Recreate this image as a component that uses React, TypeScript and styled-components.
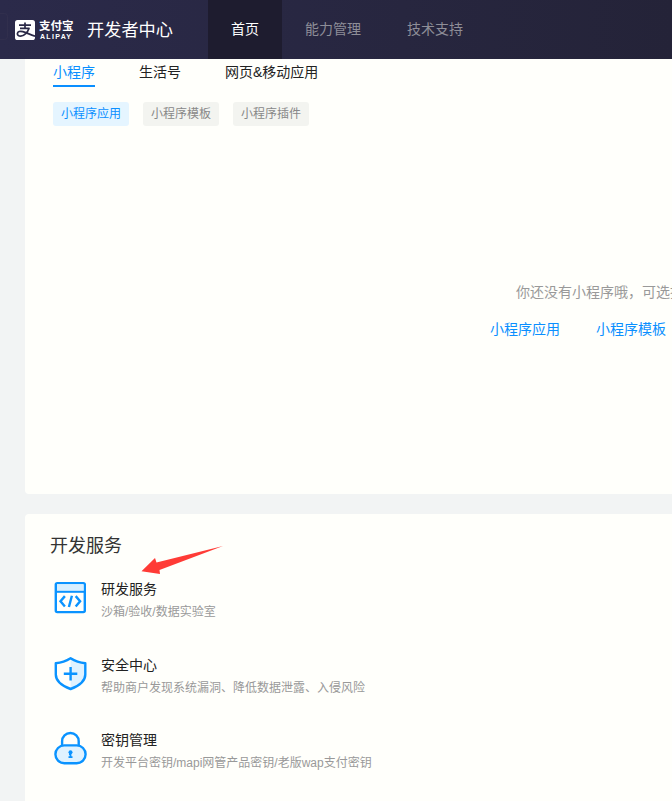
import React from "react";
import styled, { createGlobalStyle } from "styled-components";

const GlobalStyle = createGlobalStyle`
  * { box-sizing: border-box; }
  html, body { margin: 0; padding: 0; }
  body {
    background: #f2f4f4;
    font-family: "Liberation Sans", "Noto Sans CJK SC", sans-serif;
    font-size: 14px;
    overflow: hidden;
  }
`;

const Page = styled.div`
  display: flex;
  flex-direction: column;
  width: 672px;
  height: 801px;
  overflow: hidden;
`;

const Header = styled.header`
  display: flex;
  align-items: center;
  flex: none;
  height: 59px;
  background: linear-gradient(90deg, #2b2a4a 0%, #27263f 60%, #242338 100%);
`;

const MenuEdge = styled.div`
  width: 8px;
  height: 27px;
  margin-right: 7px;
  border: 1px solid #312f4d;
  border-left: 0;
  border-radius: 0 4px 4px 0;
  margin-top: -6px;
`;

const LogoMark = styled.svg`
  display: block;
  flex: none;
  width: 20px;
  height: 20px;
`;

const LogoWords = styled.div`
  display: flex;
  flex-direction: column;
  width: 35px;
  height: 21px;
  margin-left: 4px;
  color: #fff;
  white-space: nowrap;
`;

const LogoChinese = styled.span`
  font-size: 11.5px;
  font-weight: 700;
  line-height: 15px;
  height: 14px;
`;

const LogoLatin = styled.span`
  font-size: 7px;
  font-weight: 700;
  line-height: 8px;
  letter-spacing: 1.3px;
  padding-left: 1px;
`;

const SiteTitle = styled.h1`
  margin: 0 0 0 13px;
  width: 121px;
  color: #fff;
  font-size: 17.2px;
  font-weight: 400;
  line-height: 58px;
`;

const Nav = styled.nav`
  display: flex;
`;

const NavItem = styled.a<{ $active?: boolean }>`
  padding: 0 23px;
  line-height: 59px;
  color: ${(p) => (p.$active ? "#fff" : "#8e8e98")};
  background: ${(p) => (p.$active ? "#1e1c2f" : "transparent")};
`;

const Card = styled.section`
  flex: none;
  margin-left: 25px;
  background: #fffffb;
`;

const AppsCard = styled(Card)`
  height: 435px;
  padding-left: 28px;
  border-bottom-left-radius: 4px;
`;

const Tabs = styled.div`
  display: flex;
  gap: 44px;
  height: 28px;
`;

const Tab = styled.a<{ $active?: boolean }>`
  height: 28px;
  line-height: 26px;
  color: ${(p) => (p.$active ? "#0a8fff" : "#222")};
  border-bottom: 2px solid ${(p) => (p.$active ? "#0a8fff" : "transparent")};
`;

const Chips = styled.div`
  display: flex;
  gap: 14px;
  margin-top: 15px;
`;

const Chip = styled.span<{ $active?: boolean }>`
  width: 76px;
  height: 24px;
  padding: 0 8px;
  border-radius: 3px;
  font-size: 12px;
  line-height: 25px;
  white-space: nowrap;
  color: ${(p) => (p.$active ? "#0a8fff" : "#888")};
  background: ${(p) => (p.$active ? "#e5f5ff" : "#f3f4f0")};
`;

const EmptyHint = styled.p`
  margin: 156px 0 0 463px;
  color: #999;
  line-height: 20px;
  white-space: nowrap;
`;

const EmptyLinks = styled.div`
  display: flex;
  gap: 36px;
  margin: 17px 0 0 437px;
  color: #0a8fff;
  line-height: 20px;
  white-space: nowrap;
`;

const ServicesCard = styled(Card)`
  height: 300px;
  margin-top: 20px;
  padding: 18px 0 0 25px;
  border-top-left-radius: 4px;
`;

const HeadingRow = styled.div`
  display: flex;
  height: 46px;
`;

const Heading = styled.h2`
  margin: 0;
  color: #333;
  font-size: 18px;
  font-weight: 400;
  line-height: 28px;
`;

const Arrow = styled.svg`
  display: block;
  width: 84px;
  height: 30px;
  margin: 13px 0 0 19px;
`;

const Service = styled.div`
  display: flex;
  height: 75.5px;
`;

const ServiceIcon = styled.svg`
  display: block;
  flex: none;
  width: 35px;
  height: 35px;
  margin: 2px 13px 0 3px;
  fill: none;
  stroke: #0a93ff;
  stroke-width: 2.4;
  stroke-linejoin: round;
`;

const ServiceName = styled.div`
  color: #222;
  line-height: 22px;
`;

const ServiceDetail = styled.div`
  margin-top: 2px;
  color: #999;
  font-size: 12px;
  line-height: 20px;
  white-space: nowrap;
`;

const CodeIcon = () => (
  <ServiceIcon viewBox="-0.5 -0.8 35 35">
    <rect x="2.3" y="2.3" width="29" height="29" rx="1.5" />
    <path d="M3.5 3.5H30V10H3.5Z" fill="#d7efff" stroke="none" />
    <path d="M2.3 11H31.3" strokeWidth="2" />
    <path d="M11.4 15.3L7 20.5L11.4 25.7M22.2 15.3L26.6 20.5L22.2 25.7M18.4 15L15.4 26.2" strokeWidth="2.4" strokeLinejoin="miter" />
  </ServiceIcon>
);

const ShieldIcon = () => (
  <ServiceIcon viewBox="-0.3 0 35 35">
    <path d="M17.3 2.2L31.6 7V19C31.6 25.5 24.5 30.5 17.3 33Z" fill="#dff2ff" stroke="none" />
    <path d="M17.3 2.2C12.5 5.2 7.5 6.7 2.5 7.2V18.5C2.5 25.3 9 30 17.3 33C25.5 30 32 25.3 32 18.5V7.2C27 6.7 22 5.2 17.3 2.2Z" />
    <path d="M17.3 11V24.5M10.5 17.8H24" />
  </ServiceIcon>
);

const LockIcon = () => (
  <ServiceIcon viewBox="-0.2 0.3 35 35">
    <path d="M8.9 14.3V10.6A8.3 8.3 0 0 1 25.5 10.6V14.3" />
    <rect x="2.2" y="14.7" width="30.2" height="17.8" rx="8.9" fill="#dff2ff" />
    <circle cx="17.3" cy="21.6" r="2" fill="#0a93ff" stroke="none" />
    <path d="M17.3 22V27M15.3 26.5H19.3M15.8 23.4H17" strokeWidth="1.8" />
  </ServiceIcon>
);

const services = [
  { name: "研发服务", detail: "沙箱/验收/数据实验室", Icon: CodeIcon },
  { name: "安全中心", detail: "帮助商户发现系统漏洞、降低数据泄露、入侵风险", Icon: ShieldIcon },
  { name: "密钥管理", detail: "开发平台密钥/mapi网管产品密钥/老版wap支付密钥", Icon: LockIcon },
];

export default function App() {
  return (
    <Page>
      <GlobalStyle />
      <Header>
        <MenuEdge />
        <LogoMark viewBox="0 0 20 20">
          <rect width="20" height="20" rx="2.6" fill="#fff" />
          <g fill="none" stroke="#2a2947" strokeWidth="1.7">
            <path d="M4 5.2H16M10 2.5V8.2M5 8.4H14.6" />
            <path d="M14 8.3C12.8 12.2 9.2 16.2 5.7 16.2C3.4 16.2 2.3 15 2.4 13.6C2.6 11.6 5 10.8 7.8 11.6C11.5 12.6 15 14.7 20 16.2" />
          </g>
        </LogoMark>
        <LogoWords>
          <LogoChinese>支付宝</LogoChinese>
          <LogoLatin>ALIPAY</LogoLatin>
        </LogoWords>
        <SiteTitle>开发者中心</SiteTitle>
        <Nav>
          <NavItem $active>首页</NavItem>
          <NavItem>能力管理</NavItem>
          <NavItem>技术支持</NavItem>
        </Nav>
      </Header>
      <AppsCard>
        <Tabs>
          <Tab $active>小程序</Tab>
          <Tab>生活号</Tab>
          <Tab>网页&amp;移动应用</Tab>
        </Tabs>
        <Chips>
          <Chip $active>小程序应用</Chip>
          <Chip>小程序模板</Chip>
          <Chip>小程序插件</Chip>
        </Chips>
        <EmptyHint>你还没有小程序哦，可选择</EmptyHint>
        <EmptyLinks>
          <span>小程序应用</span>
          <span>小程序模板</span>
        </EmptyLinks>
      </AppsCard>
      <ServicesCard>
        <HeadingRow>
          <Heading>开发服务</Heading>
          <Arrow viewBox="0 0 84 30">
            <path d="M0.5 26.3L14 13L15.5 17.5L82 1L18.5 25L19 29Z" fill="#ff3b36" />
          </Arrow>
        </HeadingRow>
        {services.map(({ name, detail, Icon }) => (
          <Service key={name}>
            <Icon />
            <div>
              <ServiceName>{name}</ServiceName>
              <ServiceDetail>{detail}</ServiceDetail>
            </div>
          </Service>
        ))}
      </ServicesCard>
    </Page>
  );
}
